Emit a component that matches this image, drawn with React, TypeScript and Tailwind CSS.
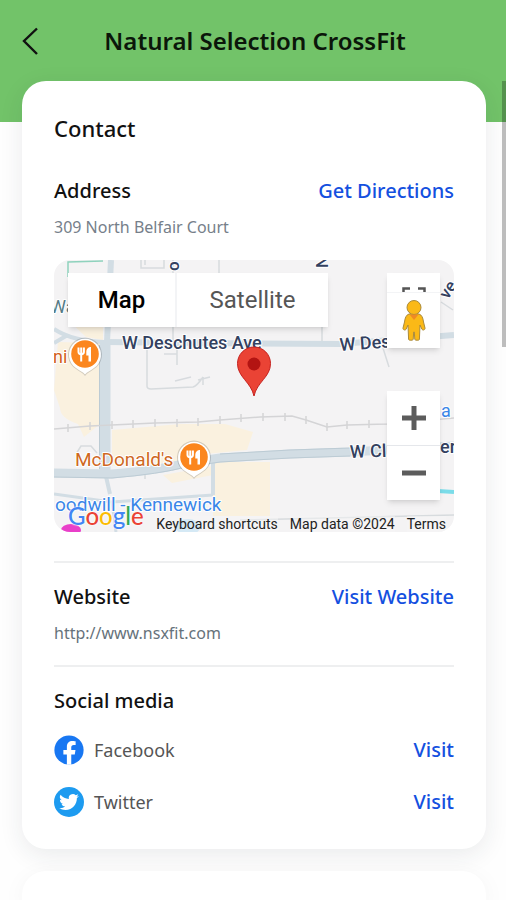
import type { ReactNode } from "react";

const socials = [
    { name: "Facebook", href: "#facebook", icon: <FacebookIcon /> },
    { name: "Twitter", href: "#twitter", icon: <TwitterIcon /> },
];

const railTicks = [
    [68, 428],
    [90, 426],
    [112, 425],
    [133, 424],
    [155, 423],
    [177, 423],
    [198, 422],
    [220, 420],
    [241, 418],
    [263, 417],
    [285, 417],
    [306, 420],
    [327, 427],
    [347, 425],
    [369, 424],
];

function FacebookIcon() {
    return (
        <svg viewBox="0 0 24 24" className="h-[30px] w-[30px]" aria-hidden="true">
            <circle cx="12" cy="12" r="11.7" fill="#1877f2" />
            <path
                fill="#fff"
                d="M10.3 23.7v-8.2H7.5V12h2.8V9.4c0-3 1.8-4.6 4.5-4.6 1.3 0 2.5.2 2.5.2v3h-1.5c-1.5 0-2 .9-2 1.9V12h3.4l-.6 3.5h-2.8v8.2a12 12 0 0 1-3.5 0Z"
            />
        </svg>
    );
}

function TwitterIcon() {
    return (
        <svg viewBox="0 0 30 30" className="h-[30px] w-[30px]" aria-hidden="true">
            <circle cx="15" cy="15" r="15" fill="#1d9bf0" />
            <g transform="translate(5.2 5.2) scale(.82)">
                <path
                    fill="#fff"
                    d="M23.95 4.57a10 10 0 0 1-2.82.77 4.96 4.96 0 0 0 2.16-2.72 9.9 9.9 0 0 1-3.12 1.19 4.92 4.92 0 0 0-8.38 4.48A13.93 13.93 0 0 1 1.64 3.16a4.92 4.92 0 0 0 1.52 6.57 4.9 4.9 0 0 1-2.23-.61v.06a4.92 4.92 0 0 0 3.95 4.83 5 5 0 0 1-2.21.08 4.94 4.94 0 0 0 4.6 3.42A9.87 9.87 0 0 1 0 19.54a13.99 13.99 0 0 0 7.55 2.21c9.05 0 14-7.5 14-13.98 0-.21 0-.42-.02-.63a9.94 9.94 0 0 0 2.46-2.55Z"
                />
            </g>
        </svg>
    );
}

function Pegman() {
    return (
        <svg viewBox="0 0 24 41" className="h-[41px] w-6" aria-hidden="true">
            <g fill="#fbb917" stroke="#a98a3c" strokeWidth="1" strokeLinejoin="round">
                <path d="M7 14c-3 1-4 4-4.500 8l-1.500 6c-.4 2 2.600 2.800 3.200 1l1.800-4 .6 14.500c0 1 4.400 1 4.600 0l.5-7.500h.6l.5 7.500c.2 1 4.600 1 4.600 0l.6-14.500 1.800 4c.7 1.800 3.600 1 3.200-1l-1.500-6c-.5-4-1.500-7-4.500-8Z" />
                <circle cx="12" cy="7.5" r="7" />
            </g>
            <path d="M7.5 14.500h9L12 20Z" fill="#f08a24" />
        </svg>
    );
}

function FoodPin({ x, y }: { x: number; y: number }) {
    return (
        <g transform={`translate(${x} ${y})`}>
            <path
                d="M0 22c-2-3-5-4-9-7a17 17 0 1 1 18 0c-4 3-7 4-9 7Z"
                fill="#000"
                opacity=".16"
            />
            <path d="M0 20.5c-2-2.5-5-3.5-9-6.5a16 16 0 1 1 18 0c-4 3-7 4-9 6.5Z" fill="#fff" />
            <circle r="13.8" fill="#fb861e" />
            <path
                d="M-6.500-6.500v4.500c0 1.500 1 2.200 2.700 2.500V7.500M-3.800-6.500V-.5M-1.100-6.500v4.500c0 1.500-1 2.200-2.700 2.500"
                fill="none"
                stroke="#fff"
                strokeWidth="2"
            />
            <path d="M6-7V7.500H3.500V1.500H1.300V-2c0-2.700 1.700-5 4.700-5Z" fill="#fff" />
        </g>
    );
}

function MapCanvas() {
    return (
        <svg
            viewBox="54 260 400 272"
            preserveAspectRatio="xMidYMid slice"
            className="h-full w-full font-['Roboto',sans-serif]"
            role="img"
            aria-label="Map"
        >
            <rect x="54" y="260" width="400" height="272" fill="#f4f3f4" />

            <g fill="#faf1df">
                <path d="M68 320H103V340L86 337Z" />
                <path d="M58 342 100 343V424L84 437 78 424Q60 418 60 408L54 390Z" />
                <path d="M112 430 180 424 225 424 253 432 247 450 205 454 185 462 112 466Z" />
                <path d="M163 475 213 466V462H270V516H213V475L172 483Z" />
            </g>

            <g fill="none" stroke="#d7dbde" strokeWidth="1.500">
                <path d="M141 260V268H164V260M145 260V265M219 260V273" />
                <path d="M147 348V386Q147 389 151 389L193 387Q197 386 203 377M164 354H177M177 343V365M175 381 191 377M198 380 210 377M203 377V385" />
                <path d="M173 260V344M322 273V343M382 345 389 367M441 302 453 310M76 454 81 446H91L97 453M145 474V479" />
                <path d="M240 520 454 515" />
            </g>

            <g fill="none" stroke="#d2dde4">
                <path d="M68 277V262L103 261" stroke="#8fd2bd" strokeWidth="1.500" />
                <path d="M111 260 107 342" strokeWidth="6" />
                <path d="M105 340V472" strokeWidth="11" />
                <path d="M54 329Q72 341 104 342M54 343 66 336" strokeWidth="4" />
                <path d="M106 342 200 343 340 344 454 335" strokeWidth="6" />
                <path d="M105 472 110 494M213 461V495" strokeWidth="4" />
                <path d="M54 494 112 502 116 532M112 502 213 495" strokeWidth="3" />
                <path d="M54 473 112 474Q160 470 186 463L220 458 290 454 350 452 454 446" strokeWidth="9" />
            </g>
            <g fill="none" stroke="#bccbd4" strokeWidth="1">
                <path d="M54 477 112 478Q160 474 186 467L220 462 290 458 350 456" />
                <path d="M99.5 345V469M220 454 290 450 350 448" />
            </g>
            <path d="M438 491 454 492" stroke="#7bdce9" strokeWidth="4" />
            <ellipse cx="188" cy="527" rx="12" ry="8" fill="#b5dcf5" />

            <g fill="none" stroke="#d4d4d6" strokeWidth="1.500">
                <path d="M54 429 90 426 155 423 198 422 220 420 260 417 292 416 306 420 327 427 347 425 387 424 454 418" />
                {railTicks.map(([x, y]) => (
                    <path key={x} d={`M${x} ${y - 4}v8`} />
                ))}
            </g>

            <g
                fill="#33415f"
                fontSize="18"
                fontWeight="500"
                stroke="#fff"
                strokeWidth="2"
                strokeLinejoin="round"
                paintOrder="stroke"
            >
                <text x="122" y="349">W Deschutes Ave</text>
                <text x="340" y="351" transform="rotate(-4 340 351)">W Des</text>
                <text x="350" y="458" transform="rotate(-2 350 458)">W Cl</text>
                <text x="440" y="453">er</text>
                <text x="448" y="300" fontSize="17" transform="rotate(-58 448 300)">ve</text>
                <text x="179" y="271" fontSize="17" transform="rotate(-90 179 271)">o</text>
                <text x="328" y="268" fontSize="17" transform="rotate(-90 328 268)">N</text>
                <text x="50" y="313" fontWeight="400" fill="#557b86">Wa</text>
                <text x="53" y="363" fontWeight="400" fill="#d2601a">ni</text>
                <text x="441" y="417" fontWeight="400" fill="#3a86e8">a</text>
            </g>
            <g
                fontSize="19"
                stroke="#fff"
                strokeWidth="2"
                strokeLinejoin="round"
                paintOrder="stroke"
            >
                <text x="75" y="466" fill="#cf681f">McDonald's</text>
                <text x="55" y="511" fill="#3a86e8">
                    oodwill - Kennewick
                </text>
            </g>

            <FoodPin x={85} y={354} />
            <FoodPin x={194} y={457} />
            <ellipse cx="71" cy="530" rx="10" ry="6" fill="#e93fc9" />
            <path
                d="M254 396C251 382 237.5 377 237.5 363.5a16.5 16.5 0 0 1 33 0C270.5 377 257 382 254 396Z"
                fill="#ea4335"
                stroke="#c5221f"
                strokeWidth="1"
            />
            <circle cx="254" cy="364" r="6.5" fill="#b31412" />
        </svg>
    );
}

function GoogleLogo() {
    return (
        <a
            href="#google"
            className="mr-auto font-['Lato',sans-serif] text-2xl leading-8 font-medium [text-shadow:0_0_2px_#fff,0_0_2px_#fff]"
        >
            <span className="text-[#4285f4]">G</span>
            <span className="text-[#ea4335]">o</span>
            <span className="text-[#fbbc05]">o</span>
            <span className="text-[#4285f4]">g</span>
            <span className="text-[#34a853]">l</span>
            <span className="text-[#ea4335]">e</span>
        </a>
    );
}

function LocationMap() {
    return (
        <div className="relative mt-[21px] h-68 overflow-hidden rounded-2xl font-['Roboto',sans-serif]">
            <MapCanvas />
            <div className="absolute top-[13px] left-3.5 flex h-[54px] text-2xl shadow-md">
                <button className="w-[109px] border-r-2 border-gray-100 bg-white font-medium text-black">
                    Map
                </button>
                <button className="w-[151px] bg-white text-[#565656]">Satellite</button>
            </div>
            <div className="absolute top-[13px] right-3.5 flex w-[53px] flex-col bg-white shadow-md">
                <button
                    aria-label="Toggle fullscreen view"
                    className="flex h-5 items-end justify-center border-b border-gray-100"
                >
                    <svg viewBox="0 0 24 6" className="h-1.5 w-6" aria-hidden="true">
                        <path
                            d="M1.5 6V2.500H8M16 2.500h6.500V6"
                            fill="none"
                            stroke="#555"
                            strokeWidth="2.500"
                        />
                    </svg>
                </button>
                <button
                    aria-label="Street View"
                    className="flex h-[55px] items-center justify-center"
                >
                    <Pegman />
                </button>
            </div>
            <div className="absolute right-3.5 bottom-8 flex w-[53px] flex-col bg-white shadow-md">
                <button
                    aria-label="Zoom in"
                    className="flex h-[55px] items-center justify-center border-b border-gray-200"
                >
                    <svg viewBox="0 0 24 24" className="h-6 w-6" aria-hidden="true">
                        <path d="M12 0v24M0 12h24" stroke="#5c5c5c" strokeWidth="5" />
                    </svg>
                </button>
                <button
                    aria-label="Zoom out"
                    className="flex h-[54px] items-center justify-center"
                >
                    <svg viewBox="0 0 24 24" className="h-6 w-6" aria-hidden="true">
                        <path d="M0 12h24" stroke="#5c5c5c" strokeWidth="5" />
                    </svg>
                </button>
            </div>
            <div className="absolute inset-x-0 bottom-0 flex items-end gap-3 pr-2 pl-3.5 text-sm leading-4 text-[#222]">
                <GoogleLogo />
                <button className="bg-[#f5f5f5]/50">Keyboard shortcuts</button>
                <span className="bg-[#f5f5f5]/50">Map data ©2024</span>
                <a href="#terms" className="bg-[#f5f5f5]/50">
                    Terms
                </a>
            </div>
        </div>
    );
}

function ActionLink({ href, children }: { href: string; children: ReactNode }) {
    return (
        <a href={href} className="text-xl leading-7 font-medium text-[#1450df]">
            {children}
        </a>
    );
}

function SectionTitle({ children }: { children: ReactNode }) {
    return <h3 className="text-xl leading-7 font-medium text-[#111]">{children}</h3>;
}

export default function App() {
    return (
        <div className="relative flex min-h-screen flex-col bg-[#fefefe] font-['Noto_Sans',sans-serif]">
            <header className="flex h-[122px] items-start bg-[#72c369] px-5 pt-[23px]">
                <button aria-label="Back" className="flex h-9 w-6 items-center">
                    <svg viewBox="0 0 24 36" className="h-9 w-6" aria-hidden="true">
                        <path
                            d="M17 5.5 4 18 17 31"
                            fill="none"
                            stroke="#111"
                            strokeWidth="2.4"
                        />
                    </svg>
                </button>
                <h1 className="flex-1 pr-5 text-center text-2xl leading-9 font-semibold text-[#0b160a]">
                    Natural Selection CrossFit
                </h1>
            </header>

            <main className="-mt-[41px] flex flex-1 flex-col gap-[22px] pr-5 pl-[22px]">
                <section className="rounded-3xl bg-white p-8 shadow-[0_6px_24px_rgba(30,40,60,0.09)]">
                    <h2 className="text-[22px] leading-[30px] font-medium text-[#111]">Contact</h2>

                    <div className="mt-[34px] flex items-center justify-between">
                        <SectionTitle>Address</SectionTitle>
                        <ActionLink href="#directions">Get Directions</ActionLink>
                    </div>
                    <p className="mt-2.5 text-base leading-6 text-[#76808a]">
                        309 North Belfair Court
                    </p>
                    <LocationMap />

                    <div className="mt-[29px] border-t-2 border-[#eeeff0] pt-5">
                        <div className="flex items-center justify-between">
                            <SectionTitle>Website</SectionTitle>
                            <ActionLink href="#website">Visit Website</ActionLink>
                        </div>
                        <p className="mt-2.5 text-base leading-6 text-[#66727b]">
                            http://www.nsxfit.com
                        </p>
                    </div>

                    <div className="mt-5 border-t-2 border-[#eeeff0] pt-5">
                        <SectionTitle>Social media</SectionTitle>
                        <ul className="mt-5 flex flex-col gap-[22px]">
                            {socials.map((social) => (
                                <li key={social.name} className="flex h-[30px] items-center gap-2.5">
                                    {social.icon}
                                    <span className="flex-1 text-lg leading-7 text-[#555]">
                                        {social.name}
                                    </span>
                                    <ActionLink href={social.href}>Visit</ActionLink>
                                </li>
                            ))}
                        </ul>
                    </div>
                </section>

                <section className="flex-1 rounded-t-3xl bg-white shadow-[0_6px_24px_rgba(30,40,60,0.05)]" />
            </main>

            <div className="absolute top-[81px] right-0 h-[266px] w-1 bg-black/25" />
        </div>
    );
}
